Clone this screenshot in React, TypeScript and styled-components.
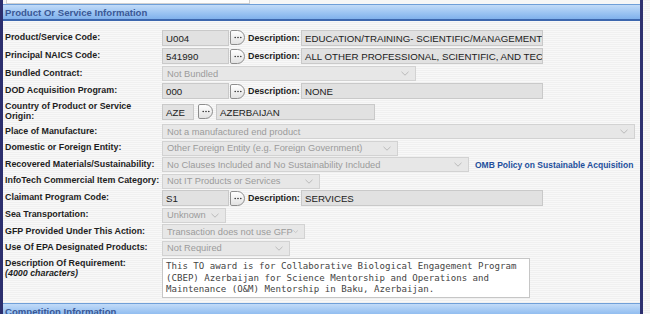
import React from "react";
import styled, { createGlobalStyle } from "styled-components";

const GlobalStyle = createGlobalStyle`
  html, body {
    margin: 0;
    padding: 0;
    background: repeating-linear-gradient(#f0f0f0 0px, #f0f0f0 1px, #f8f8f8 1px, #f8f8f8 2px);
    font-family: "Liberation Sans", Arial, sans-serif;
    overflow: hidden;
  }
`;

const Frame = styled.div`
  width: 637px;
  height: 314px;
  border-left: 3px solid #2c2f6e;
  border-right: 3px solid #2c2f6e;
  overflow: hidden;
`;

const TopStrip = styled.div`
  height: 4px;
  background: #f6f6f6;
  display: flex;
`;

const PrevField = styled.div`
  margin-left: 3px;
  width: 242px;
  height: 3px;
  background: #fdfdfd;
  border: 1px solid #cfcfcf;
  border-top: none;
`;

const SectionHeader = styled.div`
  height: 14px;
  border-top: 1px solid #6f9fd8;
  border-bottom: 2px solid #3d67ae;
  background: linear-gradient(#c2dbf8, #9cc4f2 55%, #80b1ec);
  color: #3a5896;
  font-size: 9.6px;
  font-weight: bold;
  display: flex;
  align-items: center;
  padding-left: 2px;
  white-space: nowrap;
`;

const Body = styled.div`
  padding-top: 7px;
  display: flex;
  flex-direction: column;
`;

const Row = styled.div<{ $h: number; $top?: boolean }>`
  height: ${({ $h }) => $h}px;
  display: flex;
  align-items: ${({ $top }) => ($top ? "flex-start" : "center")};
`;

const Label = styled.div<{ $top?: boolean }>`
  width: 157px;
  padding-left: 2px;
  font-size: 8.9px;
  font-weight: bold;
  color: #1e1e1e;
  line-height: 9.5px;
  padding-top: ${({ $top }) => ($top ? "3px" : "0")};
  flex-shrink: 0;
  white-space: nowrap;
`;

const Hint = styled.span`
  font-style: italic;
`;

const TextBox = styled.div<{ $w: number; $ml?: number }>`
  width: ${({ $w }) => $w}px;
  margin-left: ${({ $ml }) => $ml ?? 0}px;
  height: 16px;
  box-sizing: border-box;
  border: 1px solid #c9c9c9;
  background: #e1e1e1;
  color: #202020;
  font-size: 9.7px;
  line-height: 15px;
  padding-left: 3px;
  white-space: nowrap;
  overflow: hidden;
  flex-shrink: 0;
`;

const LookupButton = styled.div<{ $ml: number }>`
  width: 15px;
  height: 15px;
  margin-left: ${({ $ml }) => $ml}px;
  box-sizing: border-box;
  border: 1px solid #8d8d8d;
  border-radius: 2px 8px 8px 2px;
  background: linear-gradient(#ffffff, #e2e2e2);
  display: flex;
  align-items: center;
  justify-content: center;
  flex-shrink: 0;
`;

const DescLabel = styled.div`
  margin-left: 3px;
  width: 53px;
  font-size: 8.9px;
  font-weight: bold;
  color: #1e1e1e;
  flex-shrink: 0;
  white-space: nowrap;
`;

const SelectBox = styled.div<{ $w: number }>`
  width: ${({ $w }) => $w}px;
  height: 15px;
  box-sizing: border-box;
  border: 1px solid #d2d2d2;
  background: #e7e7e7;
  color: #9b9b9b;
  font-size: 9.3px;
  padding: 0 6px 0 4px;
  display: flex;
  align-items: center;
  justify-content: space-between;
  white-space: nowrap;
  flex-shrink: 0;
`;

const PolicyLink = styled.a`
  margin-left: 6px;
  font-size: 8.5px;
  font-weight: bold;
  color: #234f9c;
  text-decoration: none;
  white-space: nowrap;
`;

const ReqArea = styled.textarea`
  width: 368px;
  height: 40px;
  box-sizing: border-box;
  margin-top: 2px;
  border: 1px solid #c6c6c6;
  background: #ffffff;
  color: #454545;
  font-family: "DejaVu Sans Mono", "Liberation Mono", monospace;
  font-size: 9.1px;
  line-height: 11.5px;
  padding: 2px 3px;
  resize: none;
  overflow: hidden;
  outline: none;
`;

const Dots = () => (
  <svg width="8" height="3" viewBox="0 0 8 3">
    <circle cx="1.2" cy="1.5" r="0.8" fill="#333" />
    <circle cx="4" cy="1.5" r="0.8" fill="#333" />
    <circle cx="6.8" cy="1.5" r="0.8" fill="#333" />
  </svg>
);

const Chevron = () => (
  <svg width="8" height="5" viewBox="0 0 8 5">
    <path d="M0.5 0.8 L4 4.2 L7.5 0.8" fill="none" stroke="#b5b5b5" strokeWidth="0.9" />
  </svg>
);

const Select: React.FC<{ w: number; text: string }> = ({ w, text }) => (
  <SelectBox $w={w}>
    <span>{text}</span>
    <Chevron />
  </SelectBox>
);

const CodeRow: React.FC<{ h: number; label: string; code: string; desc: string }> = ({
  h,
  label,
  code,
  desc,
}) => (
  <Row $h={h}>
    <Label>{label}</Label>
    <TextBox $w={67}>{code}</TextBox>
    <LookupButton $ml={1}>
      <Dots />
    </LookupButton>
    <DescLabel>Description:</DescLabel>
    <TextBox $w={242}>{desc}</TextBox>
  </Row>
);

const requirement =
  "This TO award is for Collaborative Biological Engagement Program (CBEP) Azerbaijan for Science Mentorship and Operations and Maintenance (O&M) Mentorship in Baku, Azerbaijan.";

export default function App() {
  return (
    <>
      <GlobalStyle />
      <Frame>
        <TopStrip>
          <PrevField />
        </TopStrip>
        <SectionHeader>Product Or Service Information</SectionHeader>
        <Body>
          <CodeRow h={19} label="Product/Service Code:" code="U004" desc="EDUCATION/TRAINING- SCIENTIFIC/MANAGEMENT" />
          <CodeRow h={18} label="Principal NAICS Code:" code="541990" desc="ALL OTHER PROFESSIONAL, SCIENTIFIC, AND TECHNICAL SERVICES" />
          <Row $h={17}>
            <Label>Bundled Contract:</Label>
            <Select w={254} text="Not Bundled" />
          </Row>
          <CodeRow h={18} label="DOD Acquisition Program:" code="000" desc="NONE" />
          <Row $h={23}>
            <Label>
              Country of Product or Service
              <br />
              Origin:
            </Label>
            <TextBox $w={32}>AZE</TextBox>
            <LookupButton $ml={4}>
              <Dots />
            </LookupButton>
            <TextBox $w={159} $ml={3}>
              AZERBAIJAN
            </TextBox>
          </Row>
          <Row $h={17}>
            <Label>Place of Manufacture:</Label>
            <Select w={473} text="Not a manufactured end product" />
          </Row>
          <Row $h={16}>
            <Label>Domestic or Foreign Entity:</Label>
            <Select w={236} text="Other Foreign Entity (e.g. Foreign Government)" />
          </Row>
          <Row $h={17}>
            <Label>Recovered Materials/Sustainability:</Label>
            <Select w={307} text="No Clauses Included and No Sustainability Included" />
            <PolicyLink href="#">OMB Policy on Sustainable Acquisition</PolicyLink>
          </Row>
          <Row $h={16}>
            <Label>InfoTech Commercial Item Category:</Label>
            <Select w={158} text="Not IT Products or Services" />
          </Row>
          <CodeRow h={18} label="Claimant Program Code:" code="S1" desc="SERVICES" />
          <Row $h={16}>
            <Label>Sea Transportation:</Label>
            <Select w={64} text="Unknown" />
          </Row>
          <Row $h={17}>
            <Label>GFP Provided Under This Action:</Label>
            <Select w={143} text="Transaction does not use GFP" />
          </Row>
          <Row $h={16}>
            <Label>Use Of EPA Designated Products:</Label>
            <Select w={128} text="Not Required" />
          </Row>
          <Row $h={47} $top>
            <Label $top>
              Description Of Requirement:
              <br />
              <Hint>(4000 characters)</Hint>
            </Label>
            <ReqArea readOnly defaultValue={requirement} />
          </Row>
        </Body>
        <SectionHeader>Competition Information</SectionHeader>
      </Frame>
    </>
  );
}
